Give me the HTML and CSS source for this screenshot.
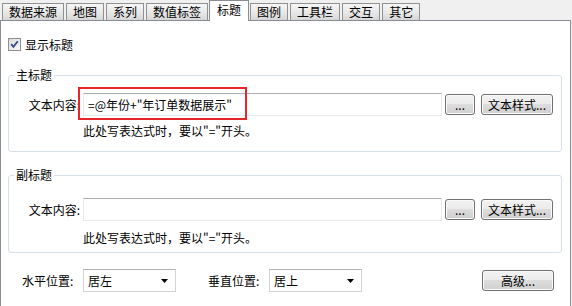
FILE: index.html
```html
<!DOCTYPE html>
<html lang="zh-CN">
<head>
<meta charset="utf-8">
<title>标题设置</title>
<link rel="stylesheet" href="styles.css">
</head>
<body>
<div class="tabs">
  <div class="tab">数据来源</div>
  <div class="tab">地图</div>
  <div class="tab">系列</div>
  <div class="tab">数值标签</div>
  <div class="tab active">标题</div>
  <div class="tab">图例</div>
  <div class="tab">工具栏</div>
  <div class="tab">交互</div>
  <div class="tab">其它</div>
</div>
<div class="panel">
  <div class="check-row">
    <span class="checkbox"><svg width="11" height="11" viewBox="0 0 11 11"><path d="M2.2 5.2 L4.4 7.8 L8.8 2.2" fill="none" stroke="#354a8c" stroke-width="1.8"/></svg></span>
    <span>显示标题</span>
  </div>

  <fieldset class="group group-main">
    <legend>主标题</legend>
    <div class="field-row">
      <span class="field-label">文本内容:</span>
      <div class="input">=@年份+"年订单数据展示"</div>
      <button class="btn btn-dots">...</button>
      <button class="btn btn-style">文本样式...</button>
      <span class="highlight"></span>
    </div>
    <div class="hint">此处写表达式时，要以"="开头。</div>
  </fieldset>

  <fieldset class="group group-sub">
    <legend>副标题</legend>
    <div class="field-row">
      <span class="field-label">文本内容:</span>
      <div class="input"></div>
      <button class="btn btn-dots">...</button>
      <button class="btn btn-style">文本样式...</button>
    </div>
    <div class="hint">此处写表达式时，要以"="开头。</div>
  </fieldset>

  <div class="pos-row">
    <span class="pos-label">水平位置:</span>
    <div class="select"><span>居左</span><svg width="7" height="4" viewBox="0 0 7 4"><path d="M0 0 H7 L3.5 4 Z" fill="#000"/></svg></div>
    <span class="pos-label pos-label-v">垂直位置:</span>
    <div class="select"><span>居上</span><svg width="7" height="4" viewBox="0 0 7 4"><path d="M0 0 H7 L3.5 4 Z" fill="#000"/></svg></div>
    <button class="btn btn-adv">高级...</button>
  </div>
</div>
</body>
</html>
```

FILE: styles.css
```css
* { box-sizing: border-box; }

html, body {
  margin: 0;
  padding: 0;
}

body {
  width: 572px;
  height: 306px;
  overflow: hidden;
  background: #f0f0f0;
  font-family: "Noto Sans CJK SC", "Liberation Sans", sans-serif;
  font-size: 12px;
  color: #000;
}

.tabs {
  display: flex;
  align-items: flex-end;
  gap: 2px;
  padding-left: 2px;
}

.tab {
  height: 17px;
  padding: 0 6px;
  line-height: 16px;
  border: 1px solid #919191;
  border-bottom: 0;
  background: linear-gradient(#f6f6f6, #e6e6e6 60%, #d6d6d6);
  white-space: nowrap;
}

.tab.active {
  position: relative;
  z-index: 1;
  height: 21px;
  margin: 0 -1px -1px;
  padding: 0 7px;
  line-height: 18px;
  background: #fff;
  border-color: #898c95;
}

.panel {
  height: 286px;
  margin-right: 1px;
  padding: 0 8px 0 7px;
  background: #fff;
  border: 1px solid #898c95;
  border-bottom: 0;
}

.check-row {
  display: flex;
  align-items: center;
  gap: 4px;
  height: 13px;
  line-height: 13px;
  margin-top: 17px;
}

.checkbox {
  display: flex;
  align-items: center;
  justify-content: center;
  width: 13px;
  height: 13px;
  border: 1px solid #8e8f8f;
  background: linear-gradient(135deg, #dcdcdc, #f8f8f8);
}

.group {
  margin: 18px 0 0;
  padding: 12px 8px 14px 5px;
  border: 1px solid #d5dfe5;
  border-radius: 3px;
  min-width: 0;
}

.group legend {
  padding: 0 2px;
  height: 12px;
  line-height: 12px;
}

.group-sub {
  margin-top: 17px;
  padding-top: 17px;
  padding-bottom: 8px;
}

.field-row {
  position: relative;
  display: flex;
  align-items: center;
  height: 23px;
}

.field-label {
  width: 66px;
  margin-right: 3px;
  text-align: right;
  white-space: nowrap;
}

.input {
  width: 359px;
  height: 23px;
  padding-left: 4px;
  line-height: 21px;
  border: 1px solid #e3e9ef;
  border-top-color: #abadb3;
  background: #fff;
  white-space: nowrap;
}

.btn {
  height: 21px;
  padding: 0;
  font: inherit;
  color: #000;
  line-height: 19px;
  text-align: center;
  border: 1px solid #707070;
  border-radius: 3px;
  background: linear-gradient(#f2f2f2, #ebebeb 50%, #dddddd 50%, #cfcfcf);
  box-shadow: inset 0 0 0 1px #fbfbfb;
}

.btn-dots {
  width: 30px;
  margin-left: 3px;
}

.btn-style {
  width: 72px;
  margin-left: 6px;
}

.highlight {
  position: absolute;
  left: 64px;
  top: -6px;
  width: 169px;
  height: 33px;
  border: 2px solid #e8262a;
}

.hint {
  margin-top: 9px;
  padding-left: 69px;
  line-height: 12px;
  white-space: nowrap;
}

.group-sub .hint {
  margin-top: 11px;
}

.pos-row {
  display: flex;
  align-items: center;
  height: 23px;
  margin-top: 16px;
  padding-left: 14px;
  padding-right: 8px;
}

.pos-label {
  width: 61px;
  white-space: nowrap;
}

.pos-label-v {
  margin-left: 32px;
}

.select {
  display: flex;
  align-items: center;
  justify-content: space-between;
  width: 93px;
  height: 23px;
  padding: 0 7px 0 4px;
  border: 1px solid #d0d3d8;
  border-top-color: #aeb1b7;
  background: #fff;
}

.btn-adv {
  width: 72px;
  margin-left: auto;
}
```
